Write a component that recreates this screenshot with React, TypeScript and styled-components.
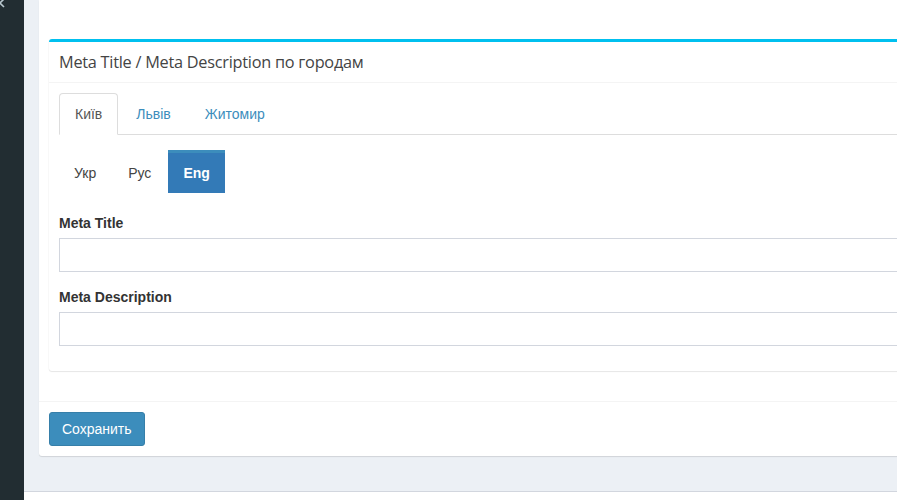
import React, { useState } from "react";
import styled, { createGlobalStyle } from "styled-components";

const GlobalStyle = createGlobalStyle`
  html, body { margin: 0; padding: 0; }
  body {
    font-family: "Liberation Sans", Arial, sans-serif;
    font-size: 14px;
    color: #333;
    background: #ecf0f5;
    overflow: hidden;
  }
  * { box-sizing: border-box; }
`;

const Layout = styled.div`
  display: flex;
  height: 500px;
  width: 897px;
  overflow: hidden;
`;

const Sidebar = styled.aside`
  position: relative;
  width: 24px;
  flex: none;
  background: #222d32;
  overflow: hidden;
`;

const Chevron = styled.svg`
  position: absolute;
  left: -3px;
  top: -3px;
`;

const Main = styled.main`
  flex: 1;
  display: flex;
  flex-direction: column;
  min-width: 0;
  overflow: hidden;
`;

const Content = styled.section`
  height: 491px;
  padding-left: 15px;
  background: #ecf0f5;
`;

const Footer = styled.footer`
  flex: 1;
  background: #fff;
  border-top: 1px solid #d2d6de;
`;

const OuterBox = styled.div`
  width: calc(100% + 40px);
  background: #fff;
  border-radius: 0 0 3px 3px;
  box-shadow: 0 1px 1px rgba(0, 0, 0, 0.12);
`;

const OuterBody = styled.div`
  padding: 39px 10px 30px 10px;
`;

const Card = styled.div`
  background: #fff;
  border-top: 3px solid #00c0ef;
  border-radius: 3px;
  box-shadow: 0 1px 1px rgba(0, 0, 0, 0.1), -1px 0 0 rgba(0, 0, 0, 0.02);
`;

const CardHeader = styled.div`
  padding: 10px;
  border-bottom: 1px solid #f4f4f4;
`;

const CardTitle = styled.h3`
  margin: 0;
  font-family: "Open Sans", "Noto Sans", sans-serif;
  font-weight: 400;
  font-size: 16.3px;
  line-height: 20px;
  color: #444;
  letter-spacing: -0.25px;
`;

const CardBody = styled.div`
  padding: 10px;
`;

const Tabs = styled.ul`
  display: flex;
  margin: 0;
  padding: 0;
  list-style: none;
  border-bottom: 1px solid #ddd;
`;

const Tab = styled.li<{ $active?: boolean }>`
  margin-right: 2px;
  margin-bottom: -1px;
  padding: 10px 15px;
  line-height: 20px;
  border: 1px solid ${(p) => (p.$active ? "#ddd" : "transparent")};
  border-bottom-color: ${(p) => (p.$active ? "#fff" : "transparent")};
  border-radius: 4px 4px 0 0;
  background: ${(p) => (p.$active ? "#fff" : "transparent")};
  color: ${(p) => (p.$active ? "#555" : "#3c8dbc")};
  cursor: pointer;
`;

const TabContent = styled.div`
  padding-top: 15px;
`;

const Pills = styled.ul`
  display: flex;
  margin: 0 0 20px 0;
  padding: 0;
  list-style: none;
`;

const Pill = styled.li<{ $active?: boolean }>`
  margin-right: 2px;
  padding: 10px 15px;
  line-height: 20px;
  border-top: 3px solid ${(p) => (p.$active ? "#3c8dbc" : "transparent")};
  background: ${(p) => (p.$active ? "#337ab7" : "transparent")};
  color: ${(p) => (p.$active ? "#fff" : "#444")};
  font-weight: ${(p) => (p.$active ? 700 : 400)};
  cursor: pointer;
`;

const FormGroup = styled.div`
  margin-bottom: 15px;
`;

const Label = styled.label`
  display: block;
  margin-bottom: 5px;
  font-weight: 700;
  line-height: 20px;
  color: #333;
`;

const Input = styled.input`
  display: block;
  width: 100%;
  height: 34px;
  padding: 6px 12px;
  border: 1px solid #d2d6de;
  border-radius: 0;
  font-family: "Liberation Sans", Arial, sans-serif;
  font-size: 14px;
  color: #555;
  outline: none;
`;

const BoxFooter = styled.div`
  border-top: 1px solid #f4f4f4;
  padding: 10px;
`;

const Button = styled.button`
  height: 34px;
  padding: 6px 12px;
  border: 1px solid #367fa9;
  border-radius: 3px;
  background: #3c8dbc;
  color: #fff;
  font-family: "Liberation Sans", Arial, sans-serif;
  font-size: 14px;
  line-height: 20px;
  cursor: pointer;
`;

const cities = ["Київ", "Львів", "Житомир"];
const langs = ["Укр", "Рус", "Eng"];

export default function App() {
  const [city, setCity] = useState(0);
  const [lang, setLang] = useState(2);
  return (
    <>
      <GlobalStyle />
      <Layout>
        <Sidebar>
          <Chevron width="12" height="12" viewBox="0 0 12 12">
            <path d="M7 2 L3 6 L7 10" fill="none" stroke="#b8c7ce" strokeWidth="1.6" />
          </Chevron>
        </Sidebar>
        <Main>
          <Content>
            <OuterBox>
              <OuterBody>
                <Card>
                  <CardHeader>
                    <CardTitle>Meta Title / Meta Description по городам</CardTitle>
                  </CardHeader>
                  <CardBody>
                    <Tabs>
                      {cities.map((c, i) => (
                        <Tab key={c} $active={i === city} onClick={() => setCity(i)}>
                          {c}
                        </Tab>
                      ))}
                    </Tabs>
                    <TabContent>
                      <Pills>
                        {langs.map((l, i) => (
                          <Pill key={l} $active={i === lang} onClick={() => setLang(i)}>
                            {l}
                          </Pill>
                        ))}
                      </Pills>
                      <FormGroup>
                        <Label>Meta Title</Label>
                        <Input type="text" />
                      </FormGroup>
                      <FormGroup>
                        <Label>Meta Description</Label>
                        <Input type="text" />
                      </FormGroup>
                    </TabContent>
                  </CardBody>
                </Card>
              </OuterBody>
              <BoxFooter>
                <Button>Сохранить</Button>
              </BoxFooter>
            </OuterBox>
          </Content>
          <Footer />
        </Main>
      </Layout>
    </>
  );
}
